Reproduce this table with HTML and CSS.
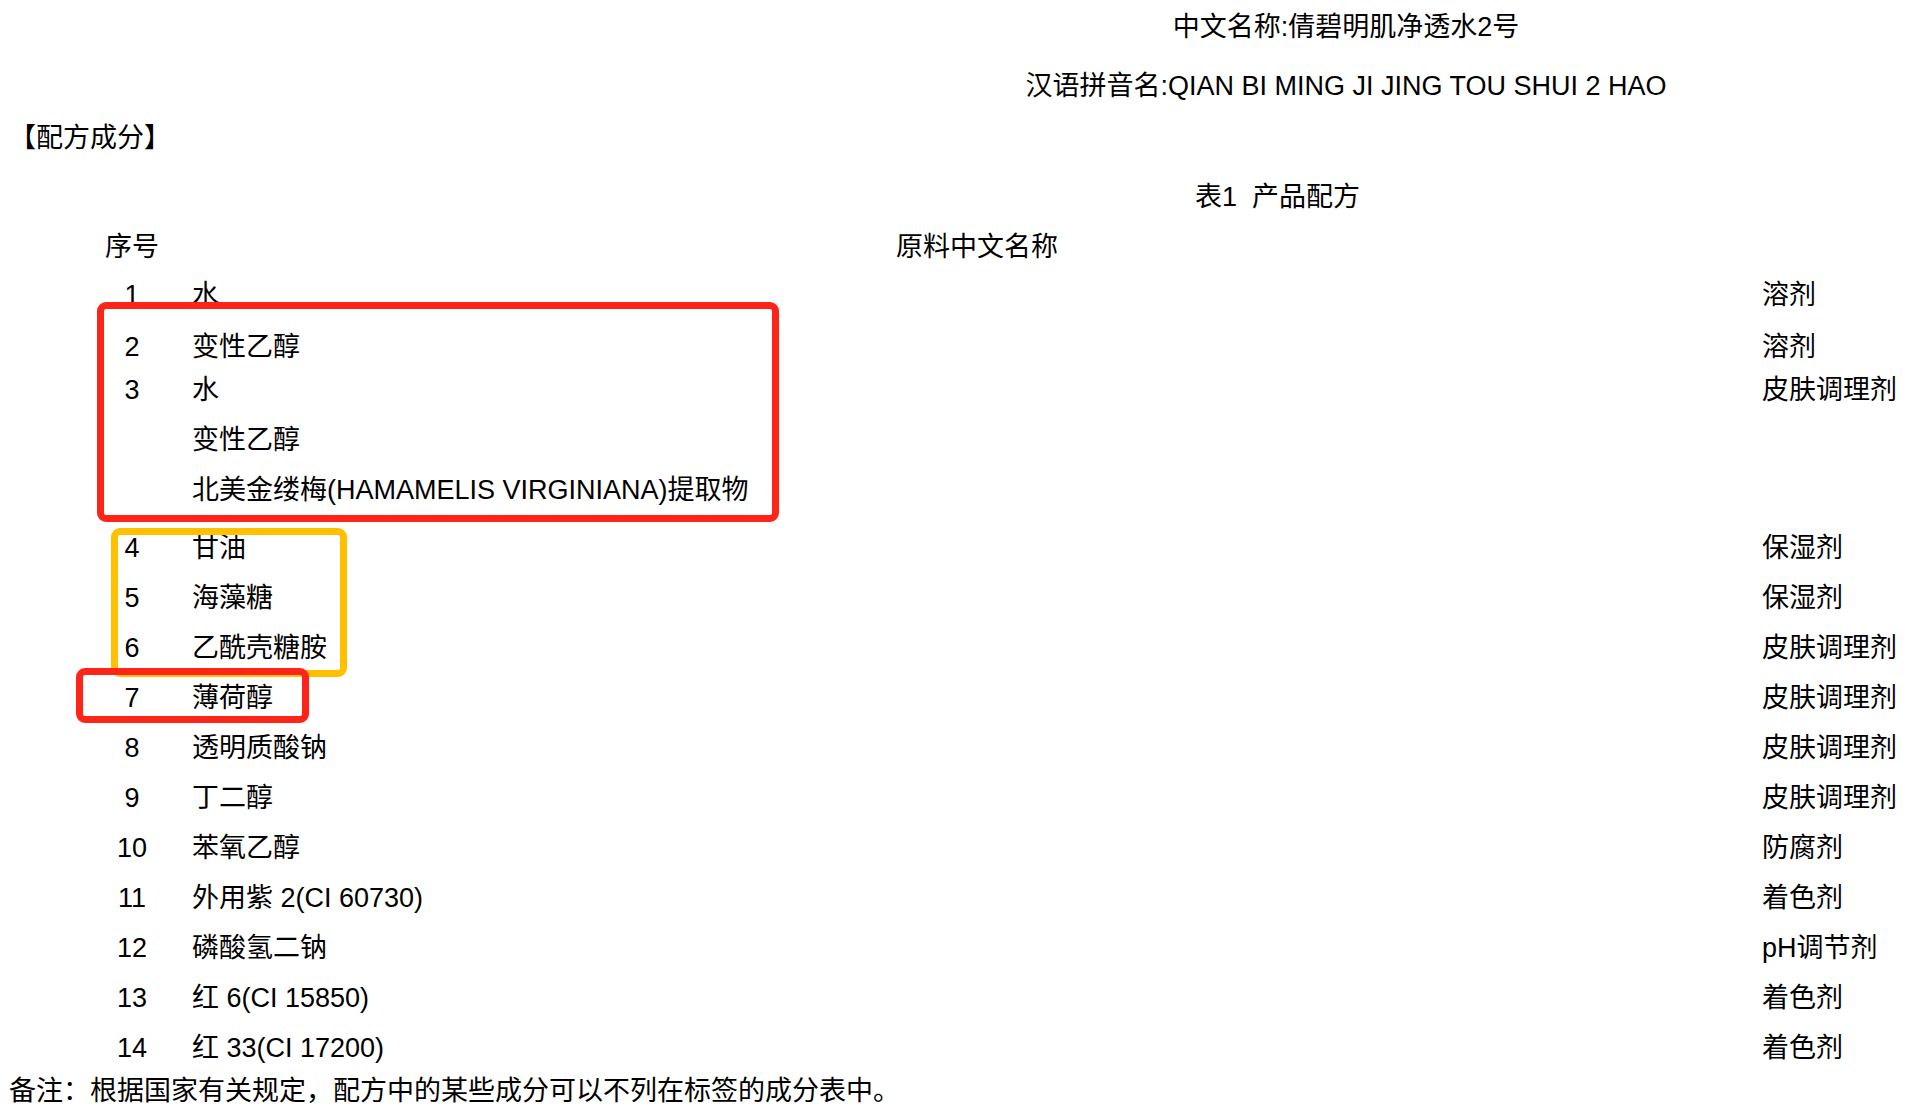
FILE: index.html
```html
<!DOCTYPE html>
<html lang="zh-CN">
<head>
  <meta charset="UTF-8">
  <title>倩碧明肌净透水2号 - 配方成分</title>
  <link rel="stylesheet" href="styles.css">
</head>
<body>
  <div class="page">
    <div class="title">中文名称:倩碧明肌净透水2号</div>
    <div class="title title-pinyin">汉语拼音名:QIAN BI MING JI JING TOU SHUI 2 HAO</div>
    <div class="section">【配方成分】</div>
    <div class="caption">表1&nbsp;&nbsp;产品配方</div>

    <div class="formula">
      <div class="row head"><span class="no">序号</span><span class="name">原料中文名称</span><span class="fn"></span></div>
      <div class="row r1"><span class="no">1</span><span class="name">水</span><span class="fn">溶剂</span></div>
      <div class="row r2"><span class="no">2</span><span class="name">变性乙醇</span><span class="fn">溶剂</span></div>
      <div class="row r3"><span class="no">3</span><span class="name">水</span><span class="fn">皮肤调理剂</span></div>
      <div class="row"><span class="no"></span><span class="name">变性乙醇</span><span class="fn"></span></div>
      <div class="row"><span class="no"></span><span class="name">北美金缕梅(HAMAMELIS VIRGINIANA)提取物</span><span class="fn"></span></div>
      <div class="row r4"><span class="no">4</span><span class="name">甘油</span><span class="fn">保湿剂</span></div>
      <div class="row"><span class="no">5</span><span class="name">海藻糖</span><span class="fn">保湿剂</span></div>
      <div class="row"><span class="no">6</span><span class="name">乙酰壳糖胺</span><span class="fn">皮肤调理剂</span></div>
      <div class="row"><span class="no">7</span><span class="name">薄荷醇</span><span class="fn">皮肤调理剂</span></div>
      <div class="row"><span class="no">8</span><span class="name">透明质酸钠</span><span class="fn">皮肤调理剂</span></div>
      <div class="row"><span class="no">9</span><span class="name">丁二醇</span><span class="fn">皮肤调理剂</span></div>
      <div class="row"><span class="no">10</span><span class="name">苯氧乙醇</span><span class="fn">防腐剂</span></div>
      <div class="row"><span class="no">11</span><span class="name">外用紫 2(CI 60730)</span><span class="fn">着色剂</span></div>
      <div class="row"><span class="no">12</span><span class="name">磷酸氢二钠</span><span class="fn">pH调节剂</span></div>
      <div class="row"><span class="no">13</span><span class="name">红 6(CI 15850)</span><span class="fn">着色剂</span></div>
      <div class="row"><span class="no">14</span><span class="name">红 33(CI 17200)</span><span class="fn">着色剂</span></div>
    </div>

    <div class="note">备注：根据国家有关规定，配方中的某些成分可以不列在标签的成分表中。</div>

    <!-- highlight marks drawn over the table -->
    <div class="mark mark-red mark-a"></div>
    <div class="mark mark-yellow mark-b"></div>
    <div class="mark mark-red mark-c"></div>
  </div>
</body>
</html>
```

FILE: styles.css
```css
/* Page */
body { margin: 0; background: #fff; color: #000; font-family: "Liberation Sans", "Noto Sans CJK SC", sans-serif; font-size: 27px; }
.page { position: relative; width: 1918px; height: 1120px; overflow: hidden; padding-left: 9px; box-sizing: border-box; }

.title { margin-left: 765px; width: 1144px; text-align: center; height: 50px; line-height: 50px; margin-top: 2px; }
.title-pinyin { margin-top: 9px; }
.section { height: 50px; line-height: 50px; margin-top: 2px; }
.caption { height: 50px; line-height: 50px; margin-top: 9px; padding-left: 1186px; }

/* Formula table */
.formula { display: flex; flex-direction: column; }
.row { display: flex; height: 50px; line-height: 50px; white-space: nowrap; }
.row .no { width: 60px; margin-left: 93px; text-align: center; }
.row .name { width: 1570px; margin-left: 30px; }
.row .fn { flex: 1; }
.row.head .name { text-align: center; }
.row.r1 { margin-top: -2px; }
.row.r2 { margin-top: 2px; }
.row.r3 { margin-top: -7px; }
.row.r4 { margin-top: 8px; }

.note { height: 36px; line-height: 36px; }

/* Highlight marks */
.mark { position: absolute; border: 7px solid; border-radius: 9px; box-sizing: border-box; }
.mark-red { border-color: #fe2418; }
.mark-yellow { border-color: #ffc000; }
.mark-a { left: 97px; top: 302px; width: 682px; height: 220px; }
.mark-b { left: 111px; top: 528px; width: 236px; height: 149px; }
.mark-c { left: 76px; top: 668px; width: 233px; height: 55px; }
```
